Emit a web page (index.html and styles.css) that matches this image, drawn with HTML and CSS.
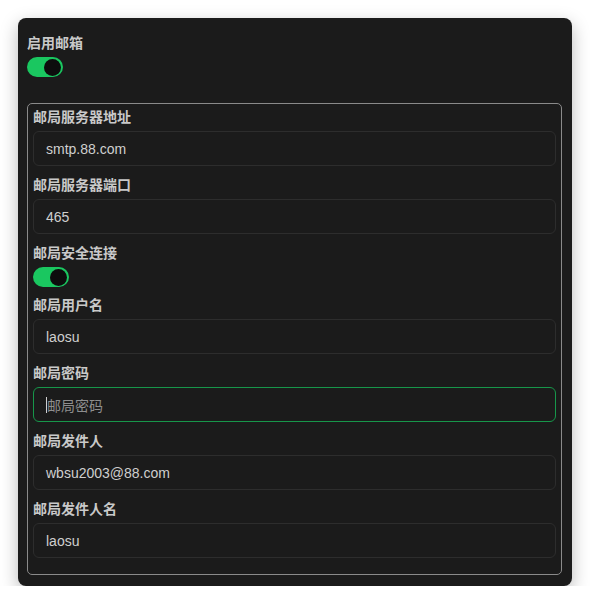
FILE: index.html
```html
<!DOCTYPE html>
<html lang="zh">
<head>
<meta charset="utf-8">
<link rel="stylesheet" href="styles.css">
</head>
<body>
<div class="panel">
  <div class="row">
    <div class="label">启用邮箱</div>
    <div class="toggle on"><span class="knob"></span></div>
  </div>
  <div class="group">
    <div class="row">
      <div class="label">邮局服务器地址</div>
      <div class="input">smtp.88.com</div>
    </div>
    <div class="row">
      <div class="label">邮局服务器端口</div>
      <div class="input">465</div>
    </div>
    <div class="row row-switch">
      <div class="label">邮局安全连接</div>
      <div class="toggle on"><span class="knob"></span></div>
    </div>
    <div class="row">
      <div class="label">邮局用户名</div>
      <div class="input">laosu</div>
    </div>
    <div class="row">
      <div class="label">邮局密码</div>
      <div class="input focus"><span class="caret"></span><span class="placeholder">邮局密码</span></div>
    </div>
    <div class="row">
      <div class="label">邮局发件人</div>
      <div class="input">wbsu2003@88.com</div>
    </div>
    <div class="row">
      <div class="label">邮局发件人名</div>
      <div class="input">laosu</div>
    </div>
  </div>
</div>
</body>
</html>
```
FILE: styles.css
```css
* { box-sizing: border-box; }
html, body { margin: 0; padding: 0; background: #ffffff; }
body {
  font-family: "Liberation Sans", "Noto Sans CJK SC", sans-serif;
  padding: 18px 18px 0 18px;
}
.panel {
  width: 554px;
  height: 568px;
  background: #1b1b1b;
  border-radius: 8px;
  box-shadow: 0 6px 18px rgba(0,0,0,0.28);
  padding: 14px 10px 11px 9px;
  display: flex;
  flex-direction: column;
}
.row {
  display: flex;
  flex-direction: column;
  align-items: flex-start;
  gap: 5px;
  margin-bottom: 8px;
}
.row-switch {
  margin-bottom: 7px;
}
.label {
  font-family: "Noto Sans CJK SC", "Liberation Sans", sans-serif;
  font-weight: 700;
  font-size: 14px;
  line-height: 20px;
  color: #c9c9c9;
}
.toggle {
  width: 36px;
  height: 20px;
  border-radius: 10px;
  background: #1ac760;
  display: flex;
  align-items: center;
  justify-content: flex-end;
  padding: 1px 2px;
}
.knob {
  width: 17px;
  height: 17px;
  border-radius: 50%;
  background: #0d0d0d;
}
.group {
  margin-top: 18px;
  border: 1px solid #8a8a8a;
  border-radius: 5px;
  padding: 2px 5px 8px 5px;
  height: 473px;
}
.input {
  width: 100%;
  height: 35px;
  border: 1px solid #2d2d2d;
  border-radius: 6px;
  background: #1b1b1b;
  padding: 0 12px;
  display: flex;
  align-items: center;
  font-size: 14px;
  color: #cfcfcf;
}
.input.focus {
  border-color: #17964a;
}
.caret {
  width: 1px;
  height: 16px;
  background: #cfcfcf;
}
.placeholder {
  font-family: "Noto Sans CJK SC", "Liberation Sans", sans-serif;
  color: #8e8e8e;
}
```
